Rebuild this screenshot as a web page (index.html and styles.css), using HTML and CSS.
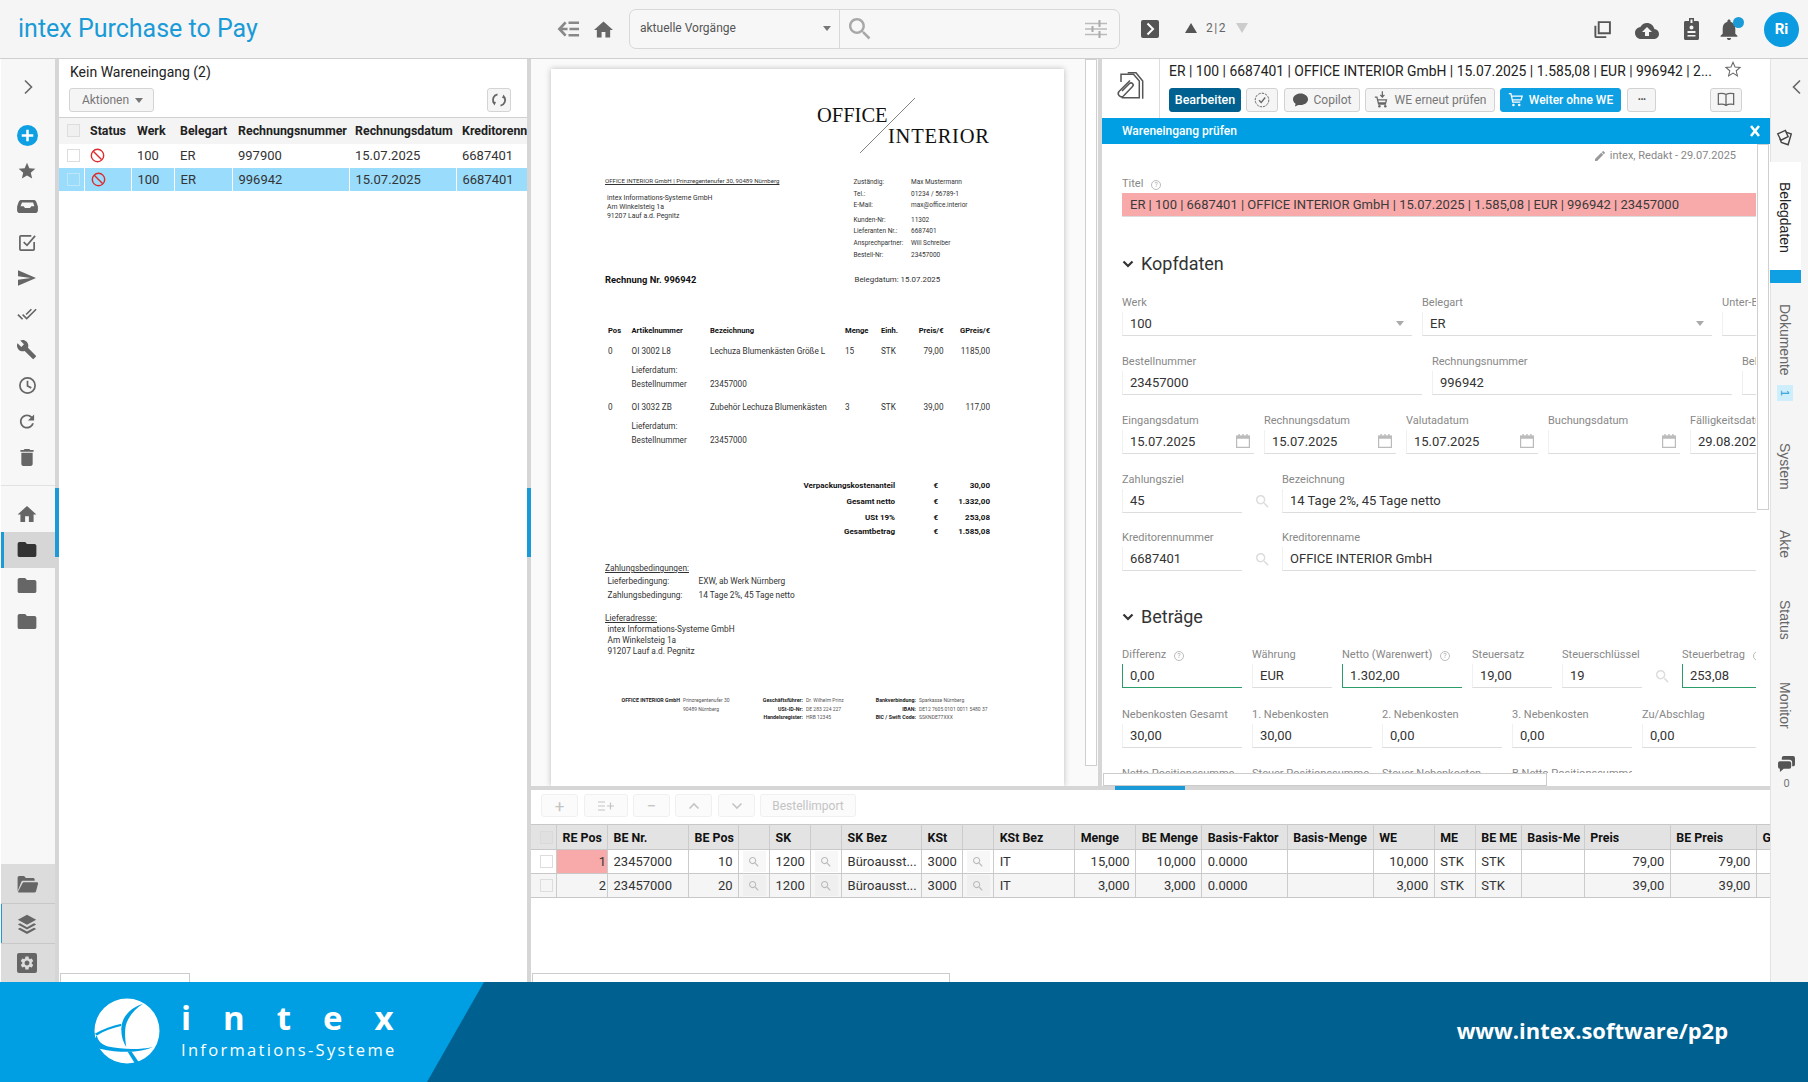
FILE: index.html
```html
<!DOCTYPE html>
<html lang="de">
<head>
<meta charset="utf-8">
<title>intex Purchase to Pay</title>
<link rel="stylesheet" href="styles.css">
</head>
<body>
<svg class="sprite" aria-hidden="true">
  <symbol id="i-home" viewBox="2 3 20 17"><path d="M10 20v-6h4v6h5v-8h3L12 3 2 12h3v8z"/></symbol>
  <symbol id="i-star" viewBox="0 0 24 24"><path d="M12 17.27L18.18 21l-1.64-7.03L22 9.24l-7.19-.61L12 2 9.19 8.63 2 9.24l5.46 4.73L5.82 21z"/></symbol>
  <symbol id="i-folder" viewBox="2 4 20 16"><path d="M10 4H4c-1.1 0-2 .9-2 2v12c0 1.1.9 2 2 2h16c1.1 0 2-.9 2-2V8c0-1.1-.9-2-2-2h-8l-2-2z"/></symbol>
  <symbol id="i-open" viewBox="0 0 24 20"><path d="M1 18V3c0-1.1.7-2 1.8-2h5.4l2 2.2h8c1 0 1.8.7 1.8 1.8v1.4H7.2c-1 0-1.8.5-2.1 1.4zM6.4 9.2c.2-.7.8-1.1 1.5-1.1h14.6c.8 0 1.4.8 1.2 1.6l-2.2 8.4c-.2.8-.8 1.3-1.6 1.3H2.6c-.8 0-1.2-.6-1-1.2z"/></symbol>
  <symbol id="i-send" viewBox="2 3 21 18"><path d="M2.01 21L23 12 2.01 3 2 10l15 2-15 2z"/></symbol>
  <symbol id="i-wrench" viewBox="1 1 23 23"><path d="M22.7 19l-9.1-9.1c.9-2.3.4-5-1.5-6.9-2-2-5-2.4-7.4-1.3L9 6 6 9 1.6 4.7C.4 7.1.9 10.1 2.9 12.1c1.9 1.9 4.6 2.4 6.9 1.5l9.1 9.1c.4.4 1 .4 1.4 0l2.3-2.3c.5-.4.5-1.1.1-1.4z"/></symbol>
  <symbol id="i-doneall" viewBox="0 0 24 24"><path d="M18 7l-1.41-1.41-6.34 6.34 1.41 1.41L18 7zm4.24-1.41L11.66 16.17 7.48 12l-1.41 1.41L11.66 19l12-12-1.42-1.41zM.41 13.41L6 19l1.41-1.41L1.83 12 .41 13.41z"/></symbol>
  <symbol id="i-trash" viewBox="5 3 14 18"><path d="M6 19c0 1.1.9 2 2 2h8c1.1 0 2-.9 2-2V7H6v12zM19 4h-3.5l-1-1h-5l-1 1H5v2h14V4z"/></symbol>
  <symbol id="i-redo" viewBox="3 3 18 18"><path d="M17.65 6.35C16.2 4.9 14.21 4 12 4c-4.42 0-7.99 3.58-7.99 8s3.57 8 7.99 8c3.73 0 6.84-2.55 7.73-6h-2.08c-.82 2.33-3.04 4-5.65 4-3.31 0-6-2.69-6-6s2.69-6 6-6c1.66 0 3.14.69 4.22 1.78L13 11h7V4l-2.35 2.35z"/></symbol>
  <symbol id="i-search" viewBox="3 3 18 18"><path d="M15.5 14h-.79l-.28-.27C15.41 12.59 16 11.11 16 9.5 16 5.91 13.09 3 9.5 3S3 5.91 3 9.5 5.91 16 9.5 16c1.61 0 3.09-.59 4.23-1.57l.27.28v.79l5 4.99L20.49 19l-4.99-5zm-6 0C7.01 14 5 11.99 5 9.5S7.01 5 9.5 5 14 7.01 14 9.5 11.99 14 9.5 14z"/></symbol>
  <symbol id="i-bell" viewBox="4 2 16 20"><path d="M12 22c1.1 0 2-.9 2-2h-4c0 1.1.9 2 2 2zm6-6v-5c0-3.07-1.63-5.64-4.5-6.32V4c0-.83-.67-1.5-1.5-1.5s-1.5.67-1.5 1.5v.68C7.64 5.36 6 7.92 6 11v5l-2 2v1h16v-1l-2-2z"/></symbol>
  <symbol id="i-cloud" viewBox="0 4 24 16"><path d="M19.35 10.04C18.67 6.59 15.64 4 12 4 9.11 4 6.6 5.64 5.35 8.04 2.34 8.36 0 10.91 0 14c0 3.31 2.69 6 6 6h13c2.76 0 5-2.24 5-5 0-2.64-2.05-4.78-4.65-4.96zM14 13v4h-4v-4H7l5-5 5 5h-3z"/></symbol>
  <symbol id="i-pencil" viewBox="3 3 18 18"><path d="M3 17.25V21h3.75L17.81 9.94l-3.75-3.75L3 17.25zM20.71 7.04c.39-.39.39-1.02 0-1.41l-2.34-2.34c-.39-.39-1.02-.39-1.41 0l-1.83 1.83 3.75 3.75 1.83-1.83z"/></symbol>
  <symbol id="i-gear" viewBox="0 0 24 24"><path d="M19.14 12.94c.04-.3.06-.61.06-.94 0-.32-.02-.64-.07-.94l2.03-1.58c.18-.14.23-.41.12-.61l-1.92-3.32c-.12-.22-.37-.29-.59-.22l-2.39.96c-.5-.38-1.03-.7-1.62-.94l-.36-2.54c-.04-.24-.24-.41-.48-.41h-3.84c-.24 0-.43.17-.47.41l-.36 2.54c-.59.24-1.13.57-1.62.94l-2.39-.96c-.22-.08-.47 0-.59.22L2.74 8.87c-.12.21-.08.47.12.61l2.03 1.58c-.05.3-.09.63-.09.94s.02.64.07.94l-2.03 1.58c-.18.14-.23.41-.12.61l1.92 3.32c.12.22.37.29.59.22l2.39-.96c.5.38 1.03.7 1.62.94l.36 2.54c.05.24.24.41.48.41h3.84c.24 0 .44-.17.47-.41l.36-2.54c.59-.24 1.13-.56 1.62-.94l2.39.96c.22.08.47 0 .59-.22l1.92-3.32c.12-.22.07-.47-.12-.61l-2.01-1.58zM12 15.6c-1.98 0-3.6-1.62-3.6-3.6s1.62-3.6 3.6-3.6 3.6 1.62 3.6 3.6-1.62 3.6-3.6 3.6z"/></symbol>
  <symbol id="i-cal" viewBox="0 0 16 16"><path fill="none" stroke="currentColor" stroke-width="1.2" d="M1.6 3.4h12.8v11H1.6z"/><path d="M1 2.6h14v3.2H1zM3.4 1h1.4v2.4H3.4zM7.3 1h1.4v2.4H7.3zM11.2 1h1.4v2.4h-1.4z"/></symbol>
  <symbol id="i-inbox" viewBox="0 0 24 15"><path fill-rule="evenodd" d="M5 0h14c1.5 0 2.4.6 3.1 2L24 7.5V12c0 1.7-1.3 3-3 3H3c-1.7 0-3-1.3-3-3V7.5L1.9 2C2.6.6 3.5 0 5 0zm.6 3L4 7.2h3.6c.6 1.4 1.4 2 2.4 2h4c1 0 1.8-.6 2.4-2H20L18.4 3z"/></symbol>
  <symbol id="i-layers" viewBox="0 0 24 24"><path d="M12 1l11 6-11 6L1 7zM3.6 11.2L12 15.8l8.4-4.6 2.6 1.5-11 6-11-6zM3.6 16.4L12 21l8.4-4.6L23 17.9 12 24 1 17.9z"/></symbol>
</svg>

<div class="app">
  <header class="topbar">
    <h1 class="brand">intex Purchase to Pay</h1>
    <div class="top-nav">
      <svg class="ic-back" viewBox="0 0 24 18"><path d="M9 2L2.500 9 9 16M3 9h8M12 2.500h11M13 9h10M12 15.500h11"/></svg>
      <svg class="ic-home"><use href="#i-home"/></svg>
    </div>
    <div class="searchbox">
      <div class="scope"><span>aktuelle Vorgänge</span><i class="caret"></i></div>
      <div class="query">
        <svg class="ic-bigsearch"><use href="#i-search"/></svg>
        <svg class="ic-sliders" viewBox="0 0 22 20"><path d="M0 4.500h22M0 10h22M0 15.500h22"/><path class="knob" d="M14.500 1v7M7.500 7v6M14.500 12v7"/></svg>
      </div>
    </div>
    <svg class="ic-squarechev" viewBox="0 0 18 18"><rect width="18" height="18" rx="2"/><path d="M6.500 3.500L12 9l-5.500 5.500"/></svg>
    <div class="pager">
      <i class="tri-up"></i><span>2 | 2</span><i class="tri-down"></i>
    </div>
    <div class="top-actions">
      <svg class="ic-copy" viewBox="0 0 20 20"><path d="M6 2.200h11.800V14H6z"/><path d="M2.500 6v11c0 .6.400 1 1 1H14"/></svg>
      <svg class="ic-cloud"><use href="#i-cloud"/></svg>
      <svg class="ic-badge" viewBox="0 0 15 22"><path fill-rule="evenodd" d="M1.500 3H5V0h5v3h3.500c.8 0 1.500.7 1.500 1.500v16c0 .8-.7 1.500-1.500 1.500h-12C.7 22 0 21.300 0 20.500v-16C0 3.700.7 3 1.500 3zM6.500 1.500V5h2V1.500zM7.500 7.500a2 2 0 100 4 2 2 0 000-4zM3.500 13v2h8v-2zM3.500 17v1.500h8V17z"/></svg>
      <div class="bell"><svg class="ic-bell"><use href="#i-bell"/></svg><i class="dot"></i></div>
      <div class="avatar">Ri</div>
    </div>
  </header>

  <main class="workspace">
    <nav class="sidebar">
      <div class="side-toggle"><svg class="ic-chev" viewBox="0 0 10 16"><path d="M2 1.500L8.500 8 2 14.500"/></svg></div>
      <div class="side-list">
        <div class="side-item"><span class="add"><svg viewBox="0 0 20 20"><path d="M10 4.500v11M4.500 10h11"/></svg></span></div>
        <div class="side-item"><svg class="si"><use href="#i-star"/></svg></div>
        <div class="side-item"><svg class="si si-inbox"><use href="#i-inbox"/></svg></div>
        <div class="side-item"><svg class="si-line" viewBox="0 0 20 20"><path d="M17 9.500V17a1 1 0 01-1 1H3a1 1 0 01-1-1V4a1 1 0 011-1h11"/><path d="M6 9.500l3.500 3.500L18 3"/></svg></div>
        <div class="side-item"><svg class="si si-send"><use href="#i-send"/></svg></div>
        <div class="side-item"><svg class="si"><use href="#i-doneall"/></svg></div>
        <div class="side-item"><svg class="si"><use href="#i-wrench"/></svg></div>
        <div class="side-item"><svg class="si-line" viewBox="0 0 20 20"><circle cx="10" cy="10" r="8"/><path d="M10 5v5.500l4 2"/></svg></div>
        <div class="side-item"><svg class="si si-sm"><use href="#i-redo"/></svg></div>
        <div class="side-item"><svg class="si si-sm"><use href="#i-trash"/></svg></div>
      </div>
      <hr class="side-div">
      <div class="side-list">
        <div class="side-item"><svg class="si si-home"><use href="#i-home"/></svg></div>
        <div class="side-item active"><svg class="si si-folder"><use href="#i-folder"/></svg></div>
        <div class="side-item"><svg class="si si-folder"><use href="#i-folder"/></svg></div>
        <div class="side-item"><svg class="si si-folder"><use href="#i-folder"/></svg></div>
      </div>
      <div class="side-bottom">
        <div class="sb-item"><svg class="si si-open"><use href="#i-open"/></svg></div>
        <div class="sb-item sb-sel"><svg class="si si-layers"><use href="#i-layers"/></svg></div>
        <div class="sb-item"><span class="gearbox"><svg><use href="#i-gear"/></svg></span></div>
      </div>
    </nav>

    <section class="listpanel">
      <h2 class="list-title">Kein Wareneingang (2)</h2>
      <div class="list-tools">
        <button class="btn-ghost">Aktionen <i class="caret"></i></button>
        <button class="btn-sync"><svg viewBox="0 0 16 16"><path d="M6.500 2.300A5.800 5.800 0 002.800 11M9.500 13.700A5.800 5.800 0 0013.200 5"/><path class="fillp" d="M1 9.500l4 .5-1.500 3.500zM15 6.500l-4-.5 1.500-3.500z"/></svg></button>
      </div>
      <table class="list-table">
        <colgroup><col class="lc0"><col class="lc1"><col class="lc2"><col class="lc3"><col class="lc4"><col class="lc5"><col class="lc6"></colgroup>
        <thead><tr><th><i class="cb cb-head"></i></th><th>Status</th><th>Werk</th><th>Belegart</th><th>Rechnungsnummer</th><th>Rechnungsdatum</th><th>Kreditorennummer</th></tr></thead>
        <tbody>
          <tr><td><i class="cb"></i></td><td><svg class="ban" viewBox="0 0 16 16"><circle cx="8" cy="8" r="6.600"/><path d="M3.500 3.500l9 9"/></svg></td><td>100</td><td>ER</td><td>997900</td><td>15.07.2025</td><td>6687401</td></tr>
          <tr class="sel"><td><i class="cb cb-sel"></i></td><td><svg class="ban" viewBox="0 0 16 16"><circle cx="8" cy="8" r="6.600"/><path d="M3.500 3.500l9 9"/></svg></td><td>100</td><td>ER</td><td>996942</td><td>15.07.2025</td><td>6687401</td></tr>
        </tbody>
      </table>
      <div class="hscroll hs-left"></div>
    </section>

    <div class="split-v"></div>

    <div class="content">
      <div class="upper">
        <section class="docview">
          <article class="page">
            <div class="inv-logo">
              <span class="logo-a">OFFICE</span>
              <span class="logo-b">INTERIOR</span>
              <svg class="logo-line" viewBox="0 0 55 55"><path d="M55 0L0 55"/></svg>
            </div>
            <div class="inv-head">
              <div class="inv-addr">
                <p class="sender">OFFICE INTERIOR GmbH | Prinzregentenufer 30, 90489 Nürnberg</p>
                <p class="addr">intex Informations-Systeme GmbH</p>
                <p class="addr">Am Winkelsteig 1a</p>
                <p class="addr">91207 Lauf a.d. Pegnitz</p>
              </div>
              <div class="contact">
                <span>Zuständig:</span><span>Max Mustermann</span>
                <span>Tel.:</span><span>01234 / 56789-1</span>
                <span>E-Mail:</span><span>max@office.interior</span>
                <span class="c-gap">Kunden-Nr:</span><span class="c-gap">11302</span>
                <span>Lieferanten Nr.:</span><span>6687401</span>
                <span>Ansprechpartner:</span><span>Will Schreiber</span>
                <span>Bestell-Nr:</span><span>23457000</span>
              </div>
            </div>
            <div class="inv-title">
              <strong>Rechnung Nr. 996942</strong>
              <span>Belegdatum: 15.07.2025</span>
            </div>
            <div class="inv-row inv-th"><span>Pos</span><span>Artikelnummer</span><span>Bezeichnung</span><span>Menge</span><span>Einh.</span><span class="r">Preis/€</span><span class="r">GPreis/€</span></div>
            <div class="inv-row m6"><span>0</span><span>OI 3002 L8</span><span>Lechuza Blumenkästen Größe L</span><span>15</span><span>STK</span><span class="r">79,00</span><span class="r">1185,00</span></div>
            <div class="inv-row m5"><span></span><span>Lieferdatum:</span></div>
            <div class="inv-row"><span></span><span>Bestellnummer</span><span>23457000</span></div>
            <div class="inv-row m9"><span>0</span><span>OI 3032 ZB</span><span>Zubehör Lechuza Blumenkästen</span><span>3</span><span>STK</span><span class="r">39,00</span><span class="r">117,00</span></div>
            <div class="inv-row m5"><span></span><span>Lieferdatum:</span></div>
            <div class="inv-row"><span></span><span>Bestellnummer</span><span>23457000</span></div>
            <div class="inv-totals">
              <span>Verpackungskostenanteil</span><span>€</span><span>30,00</span>
              <span>Gesamt netto</span><span>€</span><span>1.332,00</span>
              <span>USt 19%</span><span>€</span><span>253,08</span>
              <span class="t-tight">Gesamtbetrag</span><span class="t-tight">€</span><span class="t-tight">1.585,08</span>
            </div>
            <div class="inv-terms">
              <p class="u">Zahlungsbedingungen:</p>
              <div class="term"><span>Lieferbedingung:</span><span>EXW, ab Werk Nürnberg</span></div>
              <div class="term"><span>Zahlungsbedingung:</span><span>14 Tage 2%, 45 Tage netto</span></div>
              <p class="u u2">Lieferadresse:</p>
              <p class="deliver">intex Informations-Systeme GmbH</p>
              <p class="deliver">Am Winkelsteig 1a</p>
              <p class="deliver">91207 Lauf a.d. Pegnitz</p>
            </div>
            <div class="inv-foot">
              <b>OFFICE INTERIOR GmbH</b><span>Prinzregentenufer 30</span><b>Geschäftsführer:</b><span>Dr. Wilhelm Prinz</span><b>Bankverbindung:</b><span>Sparkasse Nürnberg</span>
              <b></b><span>90489 Nürnberg</span><b>USt-ID-Nr:</b><span>DE 283 224 227</span><b>IBAN:</b><span>DE12 7605 0101 0011 5480 37</span>
              <b></b><span></span><b>Handelsregister:</b><span>HRB 12345</span><b>BIC / Swift Code:</b><span>SSKNDE77XXX</span>
            </div>
          </article>
          <div class="doc-scroll"></div>
        </section>

        <div class="split-v"></div>

        <section class="detail">
          <div class="detail-head">
            <div class="doc-icon"><svg viewBox="0 0 30 30"><path d="M11.700 1.700H20L26.700 10v17.700"/><path d="M5 11V3.300h12.500L23.300 10v16.700H5.700"/><path d="M14 9.500L3 20.500a3.200 3.200 0 004.500 4.500L16.500 15.500a2.100 2.100 0 00-3-3L6 20"/></svg></div>
            <div class="head-main">
              <div class="head-title"><span>ER | 100 | 6687401 | OFFICE INTERIOR GmbH | 15.07.2025 | 1.585,08 | EUR | 996942 | 2...</span><svg class="ic-hstar" viewBox="0 0 24 24"><path d="M12 3l2.700 6.300 6.800.6-5.200 4.500 1.600 6.700L12 17.500l-5.900 3.600 1.600-6.700-5.200-4.500 6.800-.6z"/></svg></div>
              <div class="head-actions">
                <button class="btn btn-dark">Bearbeiten</button>
                <button class="btn btn-icon"><svg class="ic-dcheck" viewBox="0 0 16 16"><circle cx="8" cy="8" r="6.800"/><path class="solid" d="M5 8.200l2.200 2.300L11.200 5.500"/></svg></button>
                <button class="btn btn-copilot"><svg viewBox="0 0 16 14"><path d="M8 0c4.400 0 8 2.700 8 6.200s-3.600 6.200-8 6.200c-.8 0-1.500-.1-2.200-.2L2 14l.8-3C1.100 9.900 0 8.200 0 6.200 0 2.700 3.600 0 8 0z"/></svg>Copilot</button>
                <button class="btn btn-we"><svg class="cart" viewBox="0 0 18 20"><path d="M1 7h2.500l2 8.500h9M4.500 10.500h10.500l-1 3.500H5.300"/><circle cx="6.500" cy="18" r="1.500"/><circle cx="13.500" cy="18" r="1.500"/><path d="M10 0v7M7.500 4.500L10 7l2.500-2.500"/></svg>WE erneut prüfen</button>
                <button class="btn btn-blue"><svg class="cart" viewBox="0 0 18 18"><path d="M1 2h2.500l2.200 10h9M4.200 5H17l-1.300 4.500H5.200"/><circle cx="6.500" cy="15.500" r="1.500"/><circle cx="13.500" cy="15.500" r="1.500"/></svg>Weiter ohne WE</button>
                <button class="btn btn-more">···</button>
                <button class="btn btn-book"><svg viewBox="0 0 20 16"><path d="M10 2.500C8 1.200 4.500 1 1.500 1.500v12c3-.5 6.500-.3 8.500 1 2-1.300 5.500-1.500 8.500-1v-12C15.500 1 12 1.200 10 2.500zM10 2.500v12"/></svg></button>
              </div>
            </div>
          </div>
          <div class="notice"><span>Wareneingang prüfen</span><svg viewBox="0 0 10 12"><path d="M1 1l8 10M9 1L1 11"/></svg></div>
          <div class="formwrap">
            <div class="form">
              <div class="meta"><svg><use href="#i-pencil"/></svg><span>intex, Redakt - 29.07.2025</span></div>
              <div class="field f-title"><label>Titel <i class="hint">?</i></label><div class="inp inp-pink">ER | 100 | 6687401 | OFFICE INTERIOR GmbH | 15.07.2025 | 1.585,08 | EUR | 996942 | 23457000</div></div>
              <h3 class="section"><svg viewBox="0 0 12 8"><path d="M1.500 1.500L6 6l4.500-4.500"/></svg>Kopfdaten</h3>
              <div class="row r-kopf">
                <div class="field"><label>Werk</label><div class="inp has-drop">100<i class="caret"></i></div></div>
                <div class="field"><label>Belegart</label><div class="inp has-drop">ER<i class="caret"></i></div></div>
                <div class="field"><label>Unter-Beleg</label><div class="inp"></div></div>
              </div>
              <div class="row r-best gap17">
                <div class="field"><label>Bestellnummer</label><div class="inp">23457000</div></div>
                <div class="field"><label>Rechnungsnummer</label><div class="inp">996942</div></div>
                <div class="field"><label>Belegdatum</label><div class="inp"></div></div>
              </div>
              <div class="row r-date gap17">
                <div class="field"><label>Eingangsdatum</label><div class="inp has-cal">15.07.2025<svg class="cal"><use href="#i-cal"/></svg></div></div>
                <div class="field"><label>Rechnungsdatum</label><div class="inp has-cal">15.07.2025<svg class="cal"><use href="#i-cal"/></svg></div></div>
                <div class="field"><label>Valutadatum</label><div class="inp has-cal">15.07.2025<svg class="cal"><use href="#i-cal"/></svg></div></div>
                <div class="field"><label>Buchungsdatum</label><div class="inp has-cal"><svg class="cal"><use href="#i-cal"/></svg></div></div>
                <div class="field"><label>Fälligkeitsdatum</label><div class="inp">29.08.2025</div></div>
              </div>
              <div class="row r-look gap17">
                <div class="field"><label>Zahlungsziel</label><div class="inp">45</div></div>
                <svg class="mag"><use href="#i-search"/></svg>
                <div class="field"><label>Bezeichnung</label><div class="inp">14 Tage 2%, 45 Tage netto</div></div>
              </div>
              <div class="row r-look">
                <div class="field"><label>Kreditorennummer</label><div class="inp">6687401</div></div>
                <svg class="mag"><use href="#i-search"/></svg>
                <div class="field"><label>Kreditorenname</label><div class="inp">OFFICE INTERIOR GmbH</div></div>
              </div>
              <h3 class="section s2"><svg viewBox="0 0 12 8"><path d="M1.500 1.500L6 6l4.500-4.500"/></svg>Beträge</h3>
              <div class="row r-sum">
                <div class="field"><label>Differenz <i class="hint">?</i></label><div class="inp inp-ok">0,00</div></div>
                <div class="field"><label>Währung</label><div class="inp">EUR</div></div>
                <div class="field"><label>Netto (Warenwert) <i class="hint">?</i></label><div class="inp inp-ok">1.302,00</div></div>
                <div class="field"><label>Steuersatz</label><div class="inp">19,00</div></div>
                <div class="field"><label>Steuerschlüssel</label><div class="inp">19</div></div>
                <svg class="mag"><use href="#i-search"/></svg>
                <div class="field"><label>Steuerbetrag <i class="hint">?</i></label><div class="inp inp-ok">253,08</div></div>
              </div>
              <div class="row r-neben gap18">
                <div class="field"><label>Nebenkosten Gesamt</label><div class="inp">30,00</div></div>
                <div class="field"><label>1. Nebenkosten</label><div class="inp">30,00</div></div>
                <div class="field"><label>2. Nebenkosten</label><div class="inp">0,00</div></div>
                <div class="field"><label>3. Nebenkosten</label><div class="inp">0,00</div></div>
                <div class="field"><label>Zu/Abschlag</label><div class="inp">0,00</div></div>
              </div>
              <div class="row r-neben gap17">
                <div class="field"><label>Netto Positionssumme</label></div>
                <div class="field"><label>Steuer Positionssumme</label></div>
                <div class="field"><label>Steuer Nebenkosten</label></div>
                <div class="field"><label>B Netto Positionssumme</label></div>
              </div>
            </div>
            <div class="form-vscroll"></div>
          </div>
          <div class="hscroll hs-form"></div>
        </section>
      </div>

      <div class="split-h"><i class="thumb"></i></div>

      <section class="positions">
        <div class="pos-tools">
          <button class="tbtn t37">+</button>
          <button class="tbtn t44"><svg viewBox="0 0 18 10"><path d="M1 1h7M1 5h7M1 9h7M10 5h7M13.500 1.500v7"/></svg></button>
          <button class="tbtn t37">−</button>
          <button class="tbtn t37"><svg viewBox="0 0 12 8"><path d="M1.500 6.500L6 2l4.500 4.500"/></svg></button>
          <button class="tbtn t37 t-next"><svg viewBox="0 0 12 8"><path d="M1.500 1.500L6 6l4.500-4.500"/></svg></button>
          <button class="tbtn t96">Bestellimport</button>
        </div>
        <table class="pos-table">
          <colgroup>
            <col class="p25"><col class="p51"><col class="p81"><col class="p50"><col class="p31"><col class="p41"><col class="p31"><col class="p80"><col class="p41"><col class="p31"><col class="p81"><col class="p61"><col class="p66"><col class="p85"><col class="p86"><col class="p61"><col class="p41"><col class="p46"><col class="p63"><col class="p86"><col class="p86b"><col class="p14">
          </colgroup>
          <thead>
            <tr><th><i class="cb cb-phead"></i></th><th>RE Pos</th><th>BE Nr.</th><th>BE Pos</th><th></th><th>SK</th><th></th><th>SK Bez</th><th>KSt</th><th></th><th>KSt Bez</th><th>Menge</th><th>BE Menge</th><th>Basis-Faktor</th><th>Basis-Menge</th><th>WE</th><th>ME</th><th>BE ME</th><th>Basis-Me</th><th>Preis</th><th>BE Preis</th><th>G</th></tr>
          </thead>
          <tbody>
            <tr><td><i class="cb"></i></td><td class="num pink">1</td><td>23457000</td><td class="num">10</td><td class="lk"><span><svg><use href="#i-search"/></svg></span></td><td>1200</td><td class="lk"><span><svg><use href="#i-search"/></svg></span></td><td>Büroausst...</td><td>3000</td><td class="lk"><span><svg><use href="#i-search"/></svg></span></td><td>IT</td><td class="num">15,000</td><td class="num">10,000</td><td>0.0000</td><td></td><td class="num">10,000</td><td>STK</td><td>STK</td><td></td><td class="num">79,00</td><td class="num">79,00</td><td></td></tr>
            <tr class="alt"><td><i class="cb"></i></td><td class="num pad1">2</td><td>23457000</td><td class="num">20</td><td class="lk"><span><svg><use href="#i-search"/></svg></span></td><td>1200</td><td class="lk"><span><svg><use href="#i-search"/></svg></span></td><td>Büroausst...</td><td>3000</td><td class="lk"><span><svg><use href="#i-search"/></svg></span></td><td>IT</td><td class="num">3,000</td><td class="num">3,000</td><td>0.0000</td><td></td><td class="num">3,000</td><td>STK</td><td>STK</td><td></td><td class="num">39,00</td><td class="num">39,00</td><td></td></tr>
          </tbody>
        </table>
        <div class="hscroll hs-pos"></div>
      </section>
    </div>

    <aside class="rail">
      <div class="rail-top"><svg class="ic-chev" viewBox="0 0 10 16"><path d="M8 1.500L1.500 8 8 14.500"/></svg></div>
      <div class="rail-tags"><svg viewBox="0 0 18 20"><path d="M1.500 5.500L10 1.500l3 7-8 4z"/><path d="M10.500 3.500l6 2-3.500 12-7.500-2.500L4 11"/></svg></div>
      <div class="tab tab-on"><span>Belegdaten</span></div>
      <div class="tab t-dok"><span>Dokumente</span><i class="tab-badge">1</i></div>
      <div class="tab t-sys"><span>System</span></div>
      <div class="tab t-akte"><span>Akte</span></div>
      <div class="tab t-stat"><span>Status</span></div>
      <div class="tab t-mon"><span>Monitor</span></div>
      <div class="rail-chat"><svg viewBox="0 0 18 17"><path d="M6 0h10a2 2 0 012 2v7a2 2 0 01-2 2h-1v-4a3 3 0 00-3-3H4V2a2 2 0 012-2z"/><path d="M2 5.500h10a2 2 0 012 2v4a2 2 0 01-2 2H6l-4 3.500v-3.500a2 2 0 01-2-2v-4a2 2 0 012-2z"/></svg><span>0</span></div>
    </aside>
  </main>

  <footer class="banner">
    <div class="banner-logo">
      <svg class="globe" viewBox="0 0 66 67">
        <circle cx="33" cy="33" r="32.500" fill="#fff"/>
        <path fill="#009fe3" d="M49 5.700C38 9 27.500 18 27.300 30.700c-.1 7 1.500 13 5 18.300-1-5.500-1.500-12-1-18.300C32 22 39 12 49 5.700z"/>
        <path fill="#009fe3" d="M.7 35.700C9 31 18 27.500 27.300 25.700l-.3 2.300C18 30 10 32.500 3 37.500z"/>
        <path fill="#009fe3" d="M2.700 37.300C4 43 8 47 14 48.500c14 3 31 3.500 45 .5-11 5-29 7-53.300 1.700L-2 46z"/>
        <path fill="#009fe3" d="M33.500 53.500h4L46 66l-4.500.5z"/>
      </svg>
      <div class="wordmark">
        <span class="wm-a">intex</span>
        <span class="wm-b">Informations-Systeme</span>
      </div>
    </div>
    <div class="banner-url">www.intex.software/p2p</div>
  </footer>
</div>
</body>
</html>
```

FILE: styles.css
```css
* { box-sizing: border-box; }
html, body { margin: 0; padding: 0; background: #fff; }
body { font-family: Roboto, "Liberation Sans", sans-serif; font-size: 13px; color: #333; overflow: hidden; }
.sprite { width: 0; height: 0; position: absolute; }
p, h1, h2, h3 { margin: 0; font-weight: 400; }
button { font-family: inherit; cursor: default; }
svg { display: block; }
i { font-style: normal; }

.app { width: 1808px; height: 1082px; display: grid; grid-template-rows: 59px 923px 100px; overflow: hidden; }

/* top bar */
.topbar { background: #f5f5f5; border-bottom: 1px solid #cfcfcf; display: flex; align-items: center; }
.brand { margin-left: 18px; width: 539px; font-size: 25px; line-height: 56px; color: #1a9bd7; }
.top-nav { display: flex; align-items: center; gap: 14px; width: 72px; }
.ic-back { width: 23px; height: 18px; fill: none; stroke: #888; stroke-width: 2.8; }
.ic-home { width: 19px; height: 17px; fill: #666; }
.searchbox { width: 491px; height: 40px; margin-top: -1px; border: 1px solid #d8d8d8; border-radius: 7px; display: flex; background: #f7f7f7; }
.scope { width: 210px; border-right: 1px solid #d8d8d8; display: flex; align-items: center; justify-content: space-between; padding: 0 8px 1px 10px; font-size: 12px; color: #555; }
.caret { display: inline-block; width: 0; height: 0; border: 4px solid transparent; border-top: 5px solid #777; border-bottom: 0; }
.query { flex: 1; display: flex; align-items: center; justify-content: space-between; padding: 0 12px 0 9px; }
.ic-bigsearch { width: 22px; height: 22px; fill: #a8a8a8; }
.ic-sliders { width: 22px; height: 20px; fill: none; stroke: #bbb; stroke-width: 1.5; }
.ic-sliders .knob { stroke: #aaa; stroke-width: 2; }
.ic-squarechev { width: 18px; height: 18px; margin-left: 21px; fill: #555; }
.ic-squarechev path { fill: none; stroke: #fff; stroke-width: 2; }
.pager { margin-left: 26px; display: flex; align-items: center; font-size: 12px; color: #666; width: 68px; margin-top: -3px; white-space: nowrap; flex: none; }
.pager span { margin: 0 11px 0 9px; word-spacing: -1.500px; flex: none; }
.tri-up { flex: none; width: 0; height: 0; border: 6.500px solid transparent; border-bottom: 10px solid #555; border-top: 0; }
.tri-down { flex: none; width: 0; height: 0; border: 6px solid transparent; border-top: 10px solid #ccc; border-bottom: 0; }
.top-actions { margin-left: auto; display: flex; align-items: center; padding-right: 9px; }
.ic-copy { width: 19px; height: 19px; fill: none; stroke: #555; stroke-width: 2; }
.ic-cloud { width: 24px; height: 16px; margin-left: 23px; fill: #555; margin-top: 3px; }
.ic-badge { width: 15px; height: 22px; margin-left: 25px; fill: #555; }
.bell { position: relative; margin-left: 21px; }
.ic-bell { width: 18px; height: 21px; fill: #555; }
.dot { position: absolute; top: -2px; left: 13px; width: 11px; height: 11px; border-radius: 50%; background: #1a9bd7; }
.avatar { margin-left: 26px; width: 35px; height: 35px; border-radius: 50%; background: #0a9be0; color: #fff; font-weight: 700; font-size: 15px; display: flex; align-items: center; justify-content: center; }

/* workspace */
.workspace { display: grid; grid-template-columns: 59px 468px 4px 1239px 38px; min-height: 0; }

/* sidebar */
.sidebar { position: relative; background: #f7f7f7; border-right: 4px solid #d6d6d6; border-left: 1px solid #fff; display: flex; flex-direction: column; }
.sidebar::after { content: ""; position: absolute; right: -4px; top: 429px; width: 4px; height: 69px; background: #1a9bd7; }
.side-toggle { height: 56px; margin-bottom: 2px; padding-right: 1px; display: flex; align-items: center; justify-content: center; }
.ic-chev { width: 10px; height: 16px; fill: none; stroke: #666; stroke-width: 1.6; }
.side-item { height: 35.800px; padding-right: 2px; display: flex; align-items: center; justify-content: center; }
.side-item.active { background: #d6d6d6; box-shadow: inset 3px 0 0 #1a9bd7; }
.si { width: 20px; height: 20px; fill: #666; }
.si-inbox { width: 21px; height: 13px; }
.si-send { width: 18px; height: 16px; }
.si-sm { width: 16px; height: 17px; }
.si-home { width: 20px; height: 16px; }
.si-folder { width: 20px; height: 15px; }
.si-line { width: 19px; height: 19px; fill: none; stroke: #666; stroke-width: 1.800; }
.add { width: 21px; height: 21px; margin-top: 2px; border-radius: 50%; background: #0f9fe3; }
.add svg { width: 21px; height: 21px; fill: none; stroke: #fff; stroke-width: 2.400; }
.side-item.active .si { fill: #333; }
.side-div { width: 100%; height: 1px; margin: 10px 0; border: 0; background: #e2e2e2; }
.side-bottom { margin-top: auto; background: #dcdcdc; }
.sb-item { height: 39px; padding-right: 2px; display: flex; align-items: center; justify-content: center; border-top: 1px solid #c8c8c8; }
.sb-item:first-child { border-top: 0; }
.sb-sel { height: 40px; box-shadow: inset 1px 0 0 #1a9bd7; }
.si-open { width: 23px; height: 18px; }
.si-layers { width: 20px; height: 20px; }
.gearbox { width: 20px; height: 20px; border-radius: 2px; background: #666; padding: 2px; }
.gearbox svg { width: 16px; height: 16px; fill: #ddd; }

/* list */
.listpanel { display: flex; flex-direction: column; min-width: 0; background: #fff; }
.list-title { height: 29px; padding-left: 11px; font-size: 14px; line-height: 26px; color: #222; }
.list-tools { height: 24px; padding: 0 16px 0 10px; display: flex; justify-content: space-between; }
.btn-ghost { width: 85px; height: 24px; padding: 0 0 1px 2px; background: #f5f5f5; border: 1px solid #d4d4d4; border-radius: 3px; color: #777; font-size: 12px; }
.btn-ghost .caret { margin-left: 3px; vertical-align: 1px; }
.btn-sync { width: 24px; height: 24px; padding: 3px; background: #f5f5f5; border: 1px solid #d4d4d4; border-radius: 3px; }
.btn-sync svg { width: 16px; height: 16px; fill: none; stroke: #666; stroke-width: 1.800; }
.btn-sync .fillp { fill: #666; stroke: none; }
.list-table { margin-top: 5px; width: 468px; table-layout: fixed; border-collapse: collapse; border-top: 1px solid #d0d0d0; white-space: nowrap; }
.lc0 { width: 25px; } .lc1 { width: 47px; } .lc2 { width: 43px; } .lc3 { width: 58px; } .lc4 { width: 117px; } .lc5 { width: 107px; } .lc6 { width: 71px; }
.list-table th { height: 26px; padding: 0 0 0 6px; background: #f4f4f4; font-size: 12.400px; font-weight: 700; text-align: left; color: #222; overflow: hidden; }
.list-table td { height: 24px; padding: 0 0 0 6px; overflow: hidden; color: #333; }
.list-table tbody tr:nth-child(2) td { height: 23px; }
.list-table th:first-child, .list-table td:first-child { padding: 0 0 0 8px; }
.cb { display: block; width: 13px; height: 13px; background: #fff; border: 1px solid #ddd; }
.cb-head { background: #f0f0f0; }
.cb-sel { background: #9bdcfa; border-color: #bfe6fb; }
.ban { width: 15px; height: 15px; fill: none; stroke: #dd2a2a; stroke-width: 1.500; }
.sel td { background: #99dcfb; border-right: 1px solid #fff; }
.sel td:last-child { border-right: 0; }
.hscroll { height: 9px; border: 1px solid #ccc; border-bottom: 0; background: #fff; }
.hs-left { margin: auto 0 0 1px; width: 130px; }

.split-v { background: #d6d6d6; }
.listpanel + .split-v { background: linear-gradient(#d6d6d6 429px, #1a9bd7 429px, #1a9bd7 498px, #d6d6d6 498px); }

/* content */
.content { display: grid; grid-template-rows: 727px 4px 192px; min-width: 0; min-height: 0; }
.upper { display: grid; grid-template-columns: 567px 4px 668px; min-height: 0; }
.split-h { background: #d6d6d6; position: relative; }
.thumb { position: absolute; left: 584px; top: 0; width: 70px; height: 4px; background: #1a9bd7; }

/* document */
.docview { overflow: hidden; display: flex; background: #fafafa; padding: 10px 1px 0 20px; }
.page { width: 513px; height: 717px; flex: none; background: #fff; box-shadow: 0 0 6px rgba(0,0,0,.25); padding-top: 29px; color: #333; font-size: 8.200px; }
.doc-scroll { width: 12px; height: 707px; margin: -10px 0 0 21px; border: 1px solid #cfcfcf; background: #fff; }
.inv-logo { position: relative; margin-left: 266px; width: 172px; height: 55px; padding-top: 7px; font-family: "Liberation Serif", serif; font-size: 20.500px; color: #111; line-height: 21px; }
.logo-a, .logo-b { display: block; }
.logo-b { margin-left: 71px; letter-spacing: .75px; }
.logo-line { position: absolute; left: 43px; top: 0; width: 55px; height: 55px; fill: none; stroke: #666; stroke-width: .8; }
.inv-head { margin-top: 23px; height: 88.700px; padding-left: 54px; display: grid; grid-template-columns: 248.500px 1fr; }
.inv-addr { padding-top: 1px; }
.sender { font-size: 6.100px; line-height: 8px; text-decoration: underline; white-space: nowrap; }
.addr { font-size: 6.900px; line-height: 9.200px; padding-left: 2px; }
.sender + .addr { margin-top: 9px; }
.contact { display: grid; padding-top: 1px; grid-template-columns: 57.500px 1fr; grid-template-rows: repeat(3, 11.600px) 14.600px repeat(3, 11.700px); font-size: 6.500px; line-height: 11.500px; align-content: start; white-space: nowrap; }
.contact .c-gap { padding-top: 3px; }
.inv-title { padding-left: 54px; height: 30px; display: grid; grid-template-columns: 249.500px 1fr; align-items: center; font-size: 7.900px; }
.inv-title strong { font-size: 9.400px; color: #111; }
.inv-row { display: grid; grid-template-columns: 23.500px 78.500px 135px 36px 29px 33.500px 46.500px; padding-left: 57px; width: 440px; line-height: 14px; white-space: nowrap; font-size: 8.200px; }
.inv-row .r { text-align: right; }
.inv-th { margin-top: 29.300px; font-weight: 700; color: #111; font-size: 7.600px; }
.m6 { margin-top: 6px; } .m5 { margin-top: 5px; } .m9 { margin-top: 9px; }
.inv-totals { margin-top: 32px; display: grid; grid-template-columns: 344px 43px 52px; grid-auto-rows: 16px; font-weight: 700; font-size: 8px; line-height: 14px; color: #111; }
.inv-totals span { text-align: right; }
.t-tight { margin-top: -2px; }
.inv-terms { margin-top: 19px; padding-left: 54px; font-size: 8.300px; line-height: 14px; }
.inv-terms .u { text-decoration: underline; line-height: 12px; }
.inv-terms .u2 { margin-top: 10px; }
.term { display: grid; grid-template-columns: 91px 1fr; padding-left: 2.500px; line-height: 14px; }
.deliver { line-height: 11px; padding-left: 2.500px; }
.inv-foot { margin-top: 39px; display: grid; grid-template-columns: 129px 70px 53px 60px 53px 1fr; grid-auto-rows: 8.600px; font-size: 5px; line-height: 8.600px; white-space: nowrap; }
.inv-foot b { text-align: right; color: #222; font-size: 5.300px; }
.inv-foot span { color: #555; padding-left: 3px; }

/* detail */
.detail { display: flex; flex-direction: column; min-width: 0; overflow: hidden; background: #fff; }
.detail-head { height: 59px; display: flex; }
.doc-icon { width: 58px; border-right: 1px solid #ddd; display: flex; align-items: center; justify-content: center; padding-bottom: 6px; }
.doc-icon svg { width: 30px; height: 30px; fill: none; stroke: #555; stroke-width: 1.500; }
.head-main { flex: 1; padding-left: 9px; min-width: 0; }
.head-title { height: 29px; padding-bottom: 5px; display: flex; align-items: center; white-space: nowrap; color: #222; font-size: 13.900px; }
.ic-hstar { width: 18px; height: 18px; margin: -4px 0 0 12px; fill: none; stroke: #666; stroke-width: 1.400; }
.head-actions { display: flex; }
.btn { height: 24px; padding: 0 0 1px; border: 1px solid #d2d2d2; border-radius: 3px; background: #f5f5f5; color: #777; font-size: 12px; display: flex; align-items: center; justify-content: center; gap: 6px; }
.btn-dark { width: 72px; background: #00608f; border-color: #00608f; color: #fff; font-size: 12.500px; font-weight: 500; }
.btn-icon { width: 32px; margin-left: 5px; }
.ic-dcheck { width: 16px; height: 16px; fill: none; stroke: #666; stroke-width: 1; }
.ic-dcheck circle { stroke-dasharray: 2.500 1; }
.ic-dcheck .solid { stroke-width: 1.300; }
.btn-copilot { width: 76px; margin-left: 6px; }
.btn-copilot svg { width: 15px; height: 14px; fill: #555; }
.btn-we { width: 130px; margin-left: 5px; }
.cart { width: 15px; height: 17px; fill: none; stroke: #666; stroke-width: 1.500; }
.cart circle { fill: #666; stroke: none; }
.btn-blue { width: 121px; margin-left: 5px; background: #0f9fe3; border-color: #0f9fe3; color: #fff; font-weight: 500; }
.btn-blue .cart { stroke: #fff; }
.btn-blue .cart circle { fill: #fff; }
.btn-more { width: 29px; margin-left: 6px; font-weight: 700; letter-spacing: -1px; color: #555; }
.btn-book { width: 32px; margin-left: 54px; }
.btn-book svg { width: 18px; height: 15px; fill: none; stroke: #666; stroke-width: 1.400; }
.notice { height: 26px; background: #009fe3; color: #fff; font-size: 12px; font-weight: 500; display: flex; align-items: center; justify-content: space-between; padding: 0 10px 1px 20px; }
.notice svg { width: 10px; height: 12px; fill: none; stroke: #fff; stroke-width: 2.600; }
.formwrap { height: 629px; position: relative; overflow: hidden; }
.form { width: 654px; height: 629px; padding-left: 20px; overflow: hidden; }
.form > * { width: 634px; }
.meta { height: 31px; line-height: 24px; display: flex; align-items: flex-start; justify-content: flex-end; padding-right: 20px; font-size: 11px; color: #888; white-space: nowrap; }
.meta svg { width: 10px; height: 10px; fill: #999; margin: 7px 5px 0 0; }
.field { min-width: 0; }
.field label { display: block; height: 18px; font-size: 11px; line-height: 17px; color: #888; white-space: nowrap; overflow: hidden; }
.hint { display: inline-block; width: 10px; height: 10px; margin-left: 5px; border: 1px solid #bbb; border-radius: 50%; font-size: 7px; line-height: 8px; text-align: center; color: #aaa; vertical-align: 0; }
.inp { position: relative; height: 24px; padding-left: 7px; line-height: 24.500px; border-bottom: 1px solid #ddd; border-left: 1px solid #f0f0f0; color: #333; font-size: 13px; white-space: nowrap; overflow: hidden; }
.inp-pink { background: #f8aaaa; border-left: 0; padding-left: 8px; color: #3a3a3a; }
.inp-ok { border-left: 1px solid #2a9d6a; border-bottom: 1px solid #2a9d6a; }
.has-drop .caret { position: absolute; right: 8px; top: 9px; border-top-color: #aaa; }
.cal { position: absolute; right: 3px; top: 3px; width: 16px; height: 16px; fill: #bbb; color: #bbb; }
.section { height: 30px; margin-top: 32px; margin-bottom: 15px; display: flex; align-items: center; gap: 7px; font-size: 18px; line-height: 30px; color: #333; }
.section svg { width: 12px; height: 8px; fill: none; stroke: #333; stroke-width: 2.200; }
.s2 { margin-top: 31px; margin-bottom: 14px; }
.row { display: grid; margin-top: 16px; overflow: hidden; }
.row.gap17 { margin-top: 17px; }
.row.gap18 { margin-top: 18px; }
.section + .row { margin-top: 0; }
.r-kopf { grid-template-columns: 290px 290px 34px; column-gap: 10px; }
.r-best { grid-template-columns: 300px 300px 14px; column-gap: 10px; }
.r-date { grid-template-columns: 132px 132px 132px 132px 66px; column-gap: 10px; }
.r-look { grid-template-columns: 120px 40px 474px; }
.r-sum { grid-template-columns: 120px 80px 120px 80px 80px 20px 74px; column-gap: 10px; }
.r-neben { grid-template-columns: 120px 120px 120px 120px 114px; column-gap: 10px; }
.mag { width: 13px; height: 13px; fill: #ddd; align-self: end; justify-self: center; margin-bottom: 5px; }
.form-vscroll { position: absolute; left: 655px; top: 0; width: 12px; height: 366px; border: 1px solid #cfcfcf; background: #fff; }
.hs-form { height: 13px; width: 444px; margin-left: 1px; border-bottom: 1px solid #ccc; flex: none; }

/* positions */
.positions { display: flex; flex-direction: column; min-width: 0; overflow: hidden; background: #fff; }
.pos-tools { height: 34px; padding: 4px 0 0 10px; display: flex; gap: 5px; flex: none; }
.tbtn { height: 23px; padding: 0; border: 1px solid #f0f0f0; border-radius: 3px; background: #fbfbfb; color: #c4c4c4; font-size: 12px; display: flex; align-items: center; justify-content: center; }
.tbtn svg { width: 12px; height: 8px; fill: none; stroke: #c4c4c4; stroke-width: 1.600; }
.t37 { width: 37px; font-size: 17px; }
.t44 { width: 44px; margin-left: 1px; }
.t44 svg { width: 18px; height: 10px; stroke-width: 1.200; }
.t-next { margin-left: 1px; }
.t96 { width: 96px; }
.pos-table { width: 1239px; table-layout: fixed; border-collapse: collapse; white-space: nowrap; flex: none; }
.p25 { width: 25.500px; } .p51 { width: 51px; } .p81 { width: 81px; } .p50 { width: 50px; } .p31 { width: 31px; } .p41 { width: 41px; } .p80 { width: 80px; } .p61 { width: 61px; } .p66 { width: 66px; } .p85 { width: 85.500px; } .p86 { width: 86px; } .p86b { width: 86px; } .p46 { width: 46px; } .p63 { width: 63px; } .p14 { width: 13.500px; }
.pos-table th { height: 25px; padding: 0 0 0 5.500px; background: #e3e3e3; border-top: 1px solid #c8c8c8; border-bottom: 1px solid #c8c8c8; border-right: 1px solid #ccc; text-align: left; font-size: 12.400px; font-weight: 700; color: #111; overflow: hidden; }
.pos-table th:last-child, .pos-table td:last-child { border-right: 0; }
.pos-table td { height: 24px; padding: 0 5.500px; background: #fff; border-bottom: 1px solid #c8c8c8; border-right: 1px solid #ccc; color: #333; overflow: hidden; }
.pos-table th:first-child, .pos-table td:first-child { padding: 0 0 0 9px; }
.pos-table .alt td { background: #f5f5f5; }
.pos-table .num { text-align: right; }
.pos-table .pink { background: #f8aaaa; padding-right: 1px; }
.pos-table .pad1 { padding-right: 1px; }
.pos-table .lk { padding: 0 3px; }
.lk span { display: flex; width: 23px; height: 21px; margin: 0 auto; align-items: center; justify-content: center; background: #f7f7f7; }
.alt .lk span { background: #efefef; }
.lk svg { width: 10px; height: 10px; fill: #bbb; }
.cb-phead { background: #e0e0e0; border-color: #dadada; }
.alt .cb { background: #f5f5f5; }
.hs-pos { margin: auto 0 0 1px; width: 418px; }

/* rail */
.rail { background: #f5f5f5; border-left: 1px solid #e2e2e2; display: flex; flex-direction: column; align-items: flex-start; }
.rail-top { height: 56px; width: 100%; display: flex; align-items: center; justify-content: center; padding-left: 14px; }
.rail-tags { height: 47px; padding: 14px 0 0 5px; }
.rail-tags svg { width: 17px; height: 18px; fill: none; stroke: #444; stroke-width: 1.600; }
.tab { width: 27px; display: flex; flex-direction: column; align-items: center; font-family: "Liberation Sans", sans-serif; font-size: 14px; color: #666; }
.tab span { writing-mode: vertical-rl; line-height: 27px; }
.tab-on { width: 31px; margin-left: -1px; height: 121px; padding: 20px 3px 0 0; background: #fff; border-bottom: 13px solid #0f9fe3; color: #222; }
.t-dok { margin-top: 21px; }
.tab-badge { margin-top: 9px; width: 16px; height: 16px; background: #cfeefc; color: #1a9bd7; font-size: 11px; line-height: 16px; text-align: center; writing-mode: vertical-rl; }
.t-sys { margin-top: 42px; }
.t-akte { margin-top: 41px; }
.t-stat { margin-top: 42px; }
.t-mon { margin-top: 42px; }
.rail-chat { margin: 27px 0 0 7px; display: flex; flex-direction: column; align-items: center; gap: 5px; font-size: 11px; color: #777; }
.rail-chat svg { width: 17px; height: 16px; fill: #555; }

/* banner */
.banner { position: relative; background: #009fe3; color: #fff; display: flex; justify-content: space-between; overflow: hidden; }
.banner::before { content: ""; position: absolute; left: 427px; right: 0; top: 0; bottom: 0; background: #00608f; clip-path: polygon(57px 0, 100% 0, 100% 100%, 0 100%); }
.banner-logo { position: relative; display: flex; padding: 16px 0 0 94px; }
.globe { width: 66px; height: 67px; }
.wordmark { margin-left: 21px; width: 220px; font-family: "Open Sans", sans-serif; white-space: nowrap; }
.wm-a { display: block; font-size: 33px; font-weight: 700; line-height: 40px; letter-spacing: 32px; }
.wm-b { display: block; font-size: 16.500px; line-height: 22px; letter-spacing: 2.300px; margin-top: 1px; }
.banner-url { position: relative; padding-right: 80px; font-family: "Open Sans", sans-serif; font-weight: 700; font-size: 21.900px; line-height: 98px; }
```
